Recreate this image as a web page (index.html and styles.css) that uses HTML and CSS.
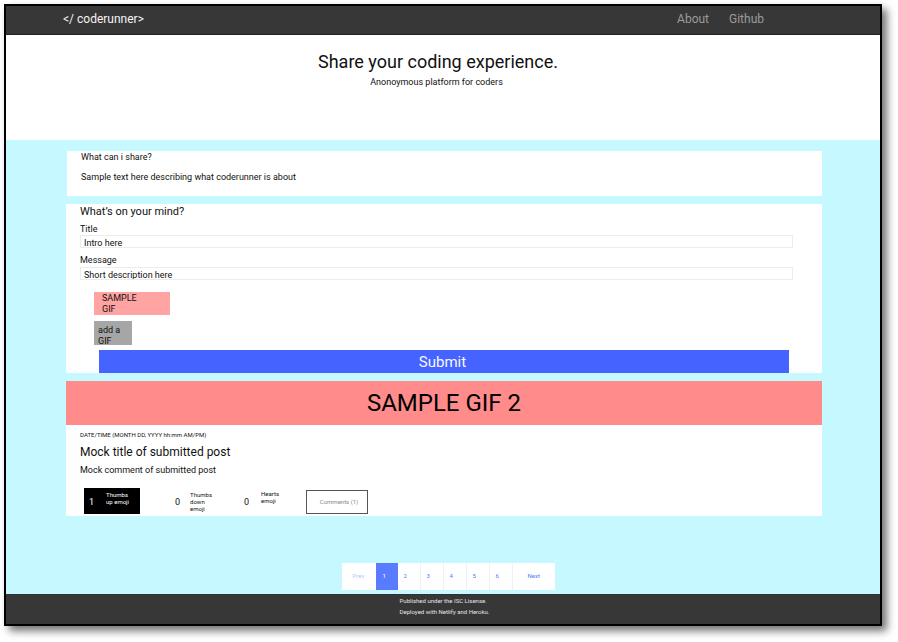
FILE: index.html
```html
<!DOCTYPE html>
<html lang="en">
<head>
<meta charset="utf-8">
<meta name="viewport" content="width=device-width, initial-scale=1">
<title>coderunner</title>
<link rel="stylesheet" href="styles.css">
</head>
<body>
<div class="frame">
  <header class="nav">
    <a class="brand" href="#">&lt;/ coderunner&gt;</a>
    <nav class="links">
      <a href="#">About</a>
      <a href="#">Github</a>
    </nav>
  </header>

  <section class="hero">
    <h1>Share your coding experience.</h1>
    <p>Anonoymous platform for coders</p>
  </section>

  <main class="main">
    <section class="card about">
      <h2>What can i share?</h2>
      <p>Sample text here describing what coderunner is about</p>
    </section>

    <form class="card form">
      <h2>What’s on your mind?</h2>
      <label for="title">Title</label>
      <input id="title" type="text" value="Intro here">
      <label for="message">Message</label>
      <input id="message" type="text" value="Short description here">
      <div class="gif-preview"><span>SAMPLE GIF</span></div>
      <button class="gif-add" type="button">add a GIF</button>
      <button class="submit" type="button">Submit</button>
    </form>

    <article class="card post">
      <div class="post-gif">SAMPLE GIF 2</div>
      <div class="post-body">
        <time>DATE/TIME (MONTH DD, YYYY hh:mm AM/PM)</time>
        <h3>Mock title of submitted post</h3>
        <p>Mock comment of submitted post</p>
        <div class="reactions">
          <button class="reaction active" type="button"><b>1</b><span>Thumbs up emoji</span></button>
          <button class="reaction" type="button"><b>0</b><span>Thumbs down emoji</span></button>
          <button class="reaction" type="button"><b>0</b><span>Hearts emoji</span></button>
          <button class="comments" type="button">Comments (1)</button>
        </div>
      </div>
    </article>

    <nav class="pages" aria-label="Pagination">
      <a class="prev" href="#">Prev</a>
      <a class="current" href="#" aria-current="page">1</a>
      <a href="#">2</a>
      <a href="#">3</a>
      <a href="#">4</a>
      <a href="#">5</a>
      <a href="#">6</a>
      <a class="next" href="#">Next</a>
    </nav>
  </main>

  <footer class="footer">
    <div>
      <p>Published under the ISC Lisense.</p>
      <p>Deployed with Netlify and Heroku.</p>
    </div>
  </footer>
</div>
</body>
</html>
```
FILE: styles.css
```css
* {
  box-sizing: border-box;
}

body {
  margin: 0;
  padding: 4px 16px 16px 4px;
  background: #fff;
  color: #111;
  font-family: Roboto, "Liberation Sans", sans-serif;
  font-size: 9px;
  line-height: 12px;
}

h1, h2, h3, p {
  margin: 0;
  font-weight: 400;
}

a {
  color: inherit;
  text-decoration: none;
}

button, input {
  margin: 0;
  padding: 0;
  border: 0;
  border-radius: 0;
  background: none;
  color: inherit;
  font: inherit;
}

.frame {
  border: 2px solid #000;
  background: #fff;
  box-shadow: 5px 5px 8px rgba(0, 0, 0, 0.55);
}

.nav {
  display: flex;
  justify-content: space-between;
  align-items: center;
  height: 29px;
  padding: 0 116px 3px 57px;
  border-bottom: 1px solid #222;
  background: #373737;
  font-size: 12px;
}

.brand {
  color: #f4f4f4;
}

.links {
  display: flex;
  gap: 20px;
  color: #9b9b9b;
}

.hero {
  padding: 15px 10px 50px 0;
  text-align: center;
}

.hero h1 {
  font-size: 18px;
  line-height: 24px;
}

.hero p {
  padding-right: 3px;
  line-height: 16px;
}

.main {
  display: flex;
  flex-direction: column;
  gap: 8px;
  padding: 11px 58px 4px 60px;
  background: #c6f8ff;
}

.card {
  background: #fff;
}

.about {
  display: grid;
  gap: 8px;
  margin-left: 1px;
  padding: 0 14px 13px;
}

.about h2 {
  font-size: 9px;
}

.form {
  display: flex;
  flex-direction: column;
  padding: 0 29px 0 14px;
}

.form h2 {
  font-size: 11px;
  line-height: 16px;
  margin-bottom: 3px;
}

.form input {
  width: 100%;
  height: 13px;
  margin-bottom: 6px;
  padding: 2px 3px 0;
  border: 1px solid #ececec;
}

.form label[for="message"] {
  margin-bottom: 1px;
}

.gif-preview {
  width: 76px;
  height: 23px;
  margin: 6px 0 6px 14px;
  padding: 1px 30px 0 8px;
  background: #ffa3a3;
  line-height: 11px;
}

.gif-add {
  width: 38px;
  height: 24px;
  margin-left: 14px;
  padding: 4px 8px 0 4px;
  overflow: hidden;
  background: #a6a6a6;
  line-height: 11px;
  text-align: left;
}

.submit {
  height: 23px;
  margin: 5px 4px 0 19px;
  padding-right: 3px;
  background: #4563ff;
  color: #f7f8ff;
  font-size: 15px;
}

.post-gif {
  padding: 6px 0;
  background: #ff8b8b;
  color: #000;
  font-size: 24px;
  line-height: 32px;
  text-align: center;
}

.post-body {
  padding: 6px 14px 2px;
}

.post-body time {
  display: block;
  font-size: 6px;
  line-height: 8px;
}

.post-body h3 {
  margin: 5px 0 4px;
  font-size: 12px;
  line-height: 16px;
}

.reactions {
  display: flex;
  align-items: flex-start;
  margin: 12px 0 0 4px;
}

.reaction {
  display: flex;
  width: 56px;
  height: 26px;
  margin-right: 30px;
  padding: 3px 5px 0;
  gap: 10px;
  font-size: 6px;
  line-height: 7px;
  text-align: left;
}

.reaction + .reaction {
  width: 49px;
  margin-right: 20px;
}

.reaction + .reaction + .reaction {
  width: 47px;
  padding-top: 2px;
  gap: 12px;
}

.reaction b {
  flex: none;
  align-self: center;
  font-size: 9px;
  font-weight: 400;
}

.reaction.active {
  padding-right: 8px;
  gap: 12px;
  background: #000;
  color: #fff;
}

.comments {
  width: 62px;
  height: 24px;
  margin-top: 2px;
  padding-left: 4px;
  border: 1px solid #555;
  color: #8a8a8a;
  font-size: 6px;
}

.pages {
  display: flex;
  align-self: center;
  height: 27px;
  margin: 39px 0 0 8px;
  background: #fff;
  color: #5578ff;
  font-size: 6px;
  line-height: 26px;
}

.pages a {
  width: 23px;
  padding-left: 6px;
  border-right: 1px solid #f0f2f2;
}

.pages .prev {
  width: 34px;
  padding-left: 11px;
  border: 0;
  color: #b8c4ff;
}

.pages .current {
  width: 22px;
  padding-left: 7px;
  border: 0;
  background: #587bff;
  color: #fff;
}

.pages .next {
  width: 42px;
  padding-left: 15px;
  border: 0;
}

.footer {
  display: flex;
  justify-content: center;
  height: 30px;
  padding-left: 3px;
  border-top: 1px solid #2a3334;
  background: #373737;
  color: #e4e4e4;
  font-size: 6px;
  line-height: 11px;
}
```
